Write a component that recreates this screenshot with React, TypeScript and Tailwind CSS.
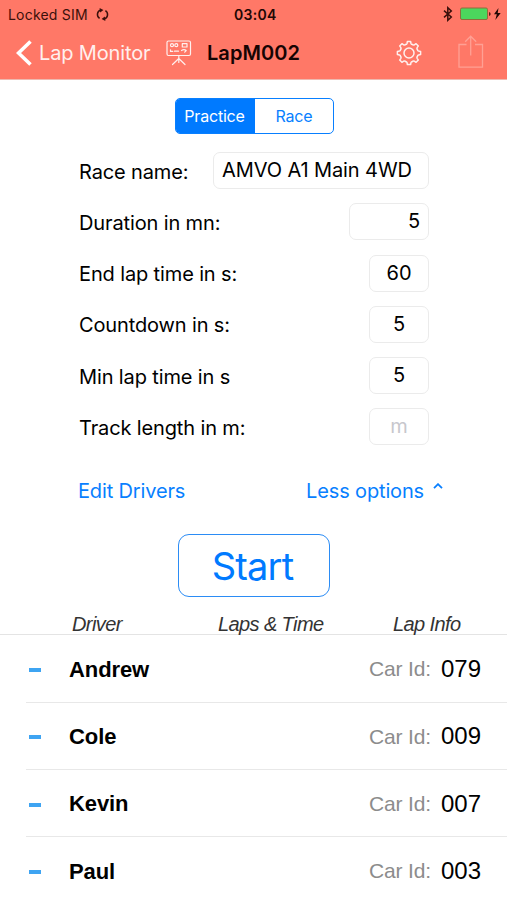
import React from 'react';

type Option = {
  label: string;
  value?: string;
  placeholder?: string;
  box: string;
};

const options: Option[] = [
  { label: 'Race name:', value: 'AMVO A1 Main 4WD', box: 'w-[216px] pl-2' },
  { label: 'Duration in mn:', value: '5', box: 'w-[80px] pr-2 text-right' },
  { label: 'End lap time in s:', value: '60', box: 'w-[60px] text-center' },
  { label: 'Countdown in s:', value: '5', box: 'w-[60px] text-center' },
  { label: 'Min lap time in s', value: '5', box: 'w-[60px] text-center' },
  { label: 'Track length in m:', placeholder: 'm', box: 'w-[60px] text-center' },
];

const drivers = [
  { name: 'Andrew', carId: '079' },
  { name: 'Cole', carId: '009' },
  { name: 'Kevin', carId: '007' },
  { name: 'Paul', carId: '003' },
];

function SyncIcon() {
  return (
    <svg className="ml-[7px] h-[13px] w-[13px]" viewBox="0 0 13 13" fill="none" stroke="currentColor" strokeWidth="1.5">
      <path d="M3.6 10.4A4.7 4.7 0 0 1 4.6 2M9.4 2.6a4.7 4.7 0 0 1-1 8.4" />
      <path d="M3.6 0 7.4 1.9 4.2 4.6zM9.4 13 5.6 11.1 8.8 8.4z" fill="currentColor" stroke="none" />
    </svg>
  );
}

function BoardIcon() {
  return (
    <svg className="h-[26px] w-[26px]" viewBox="0 0 26 26" fill="none" stroke="#fff0ee" strokeWidth="1.2" strokeLinecap="round" strokeLinejoin="round">
      <rect x="1" y="1" width="23.5" height="14.5" rx="1.5" />
      <circle cx="6" cy="5.2" r="1.5" />
      <circle cx="10.3" cy="5.2" r="1.5" />
      <rect x="16.3" y="3.7" width="4.7" height="3.3" />
      <path d="M4.5 9.8v1.6h2.2M8.5 11.2h4M15.5 10.5q2.5-1.8 4.7 0l-1.5 1.6M12.8 15.5v3M12.8 18.5 6.5 24.5M12.8 18.5 19 24.5M12.8 18.5v4" />
    </svg>
  );
}

// eight teeth around a hub, one every 45 degrees
const teeth = [0, 45, 90, 135, 180, 225, 270, 315];

function GearIcon() {
  return (
    <svg className="h-[26px] w-[26px]" viewBox="-13 -13 26 26" fill="none" stroke="#fff0ee" strokeWidth="1.5" strokeLinejoin="round" strokeLinecap="round">
      {teeth.map((angle) => (
        <path key={angle} transform={`rotate(${angle})`} d="M-3.5-8.4Q-2.3-8.4-2-9.5L-1.6-11.6H1.6L2-9.5Q2.3-8.4 3.5-8.4" />
      ))}
      <circle r="5" />
    </svg>
  );
}

function ShareIcon() {
  return (
    <svg className="h-[34px] w-[26px]" viewBox="0 0 26 34" fill="none" stroke="#ffa094" strokeWidth="1.3">
      <path d="M8.5 9.5H1v22.7h23.5V9.5H17M12.7 20.5V1.2M7.2 6.7l5.5-5.5 5.5 5.5" />
    </svg>
  );
}

function Header() {
  return (
    <header className="h-[80px] border-b border-[#eeb9b0] bg-[#ff7867]">
      <div className="flex h-[28px] items-center pl-2 text-[13px]">
        <div className="flex w-[226px] items-center text-[#3b100b]">
          <span className="w-[81px] whitespace-nowrap pt-px text-[14px] tracking-[0.2px]">Locked SIM</span>
          <SyncIcon />
        </div>
        <div className="w-[208px] pt-px text-[14px] font-semibold tracking-[0.3px] text-[#210704]">03:04</div>
        <svg className="h-[16px] w-[60px]" viewBox="0 0 60 16" fill="none">
          <path d="m2 4.6 7.3 6.4-3.5 3.3V1.7L9.3 5 2 11.4" stroke="#3b100b" strokeWidth="1.5" />
          <rect x="18.5" y="2" width="27" height="11.5" rx="1.5" fill="#4bd75d" stroke="#8e6d3c" />
          <path d="M47 6v4q1.7-.5 1.7-2T47 6" fill="#5b1b13" />
          <path d="m56.5 2-4.5 6.3h2.8L53.3 14l5.4-7h-3z" fill="#210704" />
        </svg>
      </div>
      <div className="flex h-[49px] items-center pl-4">
        <svg className="h-[26px] w-[16px]" viewBox="0 0 16 26" fill="none" stroke="white" strokeWidth="3.6">
          <path d="M14.5 1.5 2.5 13l12 11.5" />
        </svg>
        <span className="ml-[7px] w-[127px] whitespace-nowrap text-[20px] tracking-[-0.15px] text-[#fff0ee]">Lap Monitor</span>
        <BoardIcon />
        <h1 className="ml-[15px] w-[189px] text-[20px] font-semibold tracking-[0.05px] text-[#160403]">LapM002</h1>
        <GearIcon />
        <div className="ml-9 pb-[2px]">
          <ShareIcon />
        </div>
      </div>
    </header>
  );
}

export default function App() {
  return (
    <div className="h-[900px] w-[507px] overflow-hidden bg-white font-[Inter,sans-serif] text-black">
      <Header />

      <div className="ml-[175px] mt-[18px] flex h-[36px] w-[159px] overflow-hidden rounded-[5px] border-[1.5px] border-[#087fff] text-[16px] tracking-[-0.2px] text-[#087fff]">
        <button className="w-[79px] bg-[#007aff] pr-[2px] text-white">Practice</button>
        <button className="flex-1">Race</button>
      </div>

      <div className="ml-[79px] mt-[18px] w-[350px]">
        {options.map((o) => (
          <div key={o.label} className="mb-[14.3px] flex h-[37px] items-center justify-between text-[20px]">
            <label className="pt-[2px] tracking-[-0.13px]">{o.label}</label>
            <div className={`h-[37px] rounded-[7px] border border-[#ebebeb] leading-[35px] tracking-[-0.1px] ${o.box}`}>
              {o.value ?? <span className="text-[#c7c7cd]">{o.placeholder}</span>}
            </div>
          </div>
        ))}
      </div>

      <div className="ml-[78px] mt-[31px] flex h-[30px] w-[365px] items-center justify-between text-[20px] tracking-[-0.15px] text-[#087fff]">
        <button>Edit Drivers</button>
        <button className="flex items-center">
          Less options
          <svg className="mb-[10px] ml-[9px] h-[6px] w-[10px]" viewBox="0 0 10 6" fill="none" stroke="currentColor" strokeWidth="1.8">
            <path d="M1 5.2 5 1.2l4 4" />
          </svg>
        </button>
      </div>

      <button className="ml-[178px] mt-[28px] block h-[63px] w-[152px] rounded-[11px] border-[1.5px] border-[#2b8cf5] pr-[3px] text-[38px] leading-[60px] tracking-[-0.8px] text-[#007aff]">
        Start
      </button>

      <div className="mt-[15px] flex h-[23px] border-b border-[#e4e4e4] pl-[72px] font-['Liberation_Sans'] text-[20px] italic leading-[24px] tracking-[-0.6px] text-[#333]">
        <span className="w-[146px]">Driver</span>
        <span className="w-[175px]">Laps &amp; Time</span>
        <span>Lap Info</span>
      </div>

      <ul className="font-['Liberation_Sans']">
        {drivers.map((d) => (
          <li key={d.name} className="ml-[26px] flex h-[67.3px] items-center border-b border-[#e8e8e8] pr-[26px]">
            <span className="ml-[3px] mt-[3px] h-[4px] w-[12px] bg-[#3ea4f2]" />
            <span className="ml-[28px] flex-1 pt-px text-[22px] font-bold tracking-[-0.1px]">{d.name}</span>
            <span className="mr-[10px] pt-[1px] text-[21px] tracking-[-0.15px] text-[#8c8c8c]">Car Id:</span>
            <span className="pt-[1px] text-[24px]">{d.carId}</span>
          </li>
        ))}
      </ul>
    </div>
  );
}
